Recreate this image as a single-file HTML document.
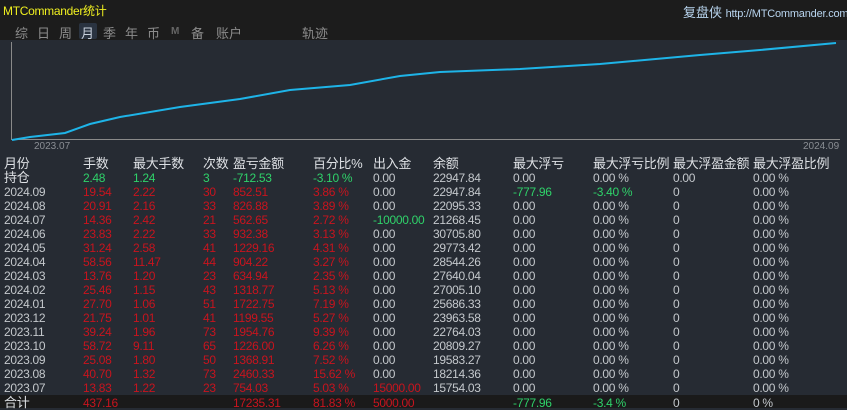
<!DOCTYPE html>
<html><head><meta charset="utf-8"><style>
body{margin:0;width:847px;height:408px;overflow:hidden;background:#262b33;font-family:"Liberation Sans","Noto Sans CJK SC",sans-serif;position:relative}
.top{position:absolute;left:0;top:0;width:847px;height:40px;background:#1c1c1c}
.t{position:absolute;white-space:nowrap}
.tab{position:absolute;top:23px;font-size:13px;color:#8c8c8c;white-space:nowrap}
.r{position:absolute;left:0;width:847px;height:14px;font-size:12px;line-height:14px;color:#c4c8cc;letter-spacing:-0.3px}
.r span{position:absolute;top:0}
.red{color:#c8141e}.grn{color:#2fd26a}
</style></head><body>
<div class="top"></div>
<div class="t" style="left:3px;top:2px;font-size:12px;color:#f0f020;letter-spacing:-0.3px">MTCommander统计</div>
<div class="t" style="left:683px;top:2px;font-size:13px;color:#b8d4ee">复盘侠 <span style="font-size:11px;letter-spacing:-0.2px">http://MTCommander.com</span></div>
<div class="t" style="left:79px;top:23px;width:18px;height:16px;background:#2a3340;border-radius:2px"></div>
<div class="tab" style="left:15px">综</div>
<div class="tab" style="left:37px">日</div>
<div class="tab" style="left:59px">周</div>
<div class="tab" style="left:81px;color:#c8d0dc">月</div>
<div class="tab" style="left:103px">季</div>
<div class="tab" style="left:125px">年</div>
<div class="tab" style="left:147px">币</div>
<div class="tab" style="left:171px;top:26px;font-size:10px;color:#666;font-weight:bold">M</div>
<div class="tab" style="left:191px">备</div>
<div class="tab" style="left:216px">账户</div>
<div class="tab" style="left:302px">轨迹</div>
<svg style="position:absolute;left:0;top:40px" width="847" height="115">
<line x1="11.5" y1="2" x2="11.5" y2="99.5" stroke="#8a8a8a"/>
<line x1="11" y1="99.5" x2="840" y2="99.5" stroke="#8a8a8a"/>
<polyline fill="none" stroke="#1eb4e8" stroke-width="2" points="12,100 30,97 65,93 90,84 120,77 180,67 240,59 290,50 350,45 400,36 440,32 520,29 600,24 700,15 760,10 836,3"/>
<text x="34" y="109" font-size="10" fill="#8a8e94" font-family="Liberation Sans">2023.07</text>
<text x="803" y="109" font-size="10" fill="#8a8e94" font-family="Liberation Sans">2024.09</text>
</svg>
<div class="r" style="top:157px;font-size:13px;color:#dde0e4;height:16px"><span style="left:4px">月份</span><span style="left:83px">手数</span><span style="left:133px">最大手数</span><span style="left:203px">次数</span><span style="left:233px">盈亏金额</span><span style="left:313px">百分比%</span><span style="left:373px">出入金</span><span style="left:433px">余额</span><span style="left:513px">最大浮亏</span><span style="left:593px">最大浮亏比例</span><span style="left:673px">最大浮盈金额</span><span style="left:753px">最大浮盈比例</span></div>
<div class="r" style="top:171px"><span style="left:4px;font-size:13px;color:#dde0e4">持仓</span><span class="grn" style="left:83px">2.48</span><span class="grn" style="left:133px">1.24</span><span class="grn" style="left:203px">3</span><span class="grn" style="left:233px">-712.53</span><span class="grn" style="left:313px">-3.10 %</span><span style="left:373px">0.00</span><span style="left:433px">22947.84</span><span style="left:513px">0.00</span><span style="left:593px">0.00 %</span><span style="left:673px">0.00</span><span style="left:753px">0.00 %</span></div>
<div style="position:absolute;left:0;top:395px;width:847px;height:13px;background:#1a1a1a"></div>
<div class="r" style="top:396px"><span style="left:4px;font-size:13px;color:#dde0e4">合计</span><span class="red" style="left:83px">437.16</span><span class="red" style="left:233px">17235.31</span><span class="red" style="left:313px">81.83 %</span><span class="red" style="left:373px">5000.00</span><span class="grn" style="left:513px">-777.96</span><span class="grn" style="left:593px">-3.4 %</span><span style="left:673px">0</span><span style="left:753px">0 %</span></div>
<div class="r" style="top:185px"><span style="left:4px">2024.09</span><span class="red" style="left:83px">19.54</span><span class="red" style="left:133px">2.22</span><span class="red" style="left:203px">30</span><span class="red" style="left:233px">852.51</span><span class="red" style="left:313px">3.86 %</span><span style="left:373px">0.00</span><span style="left:433px">22947.84</span><span class="grn" style="left:513px">-777.96</span><span class="grn" style="left:593px">-3.40 %</span><span style="left:673px">0</span><span style="left:753px">0.00 %</span></div>
<div class="r" style="top:199px"><span style="left:4px">2024.08</span><span class="red" style="left:83px">20.91</span><span class="red" style="left:133px">2.16</span><span class="red" style="left:203px">33</span><span class="red" style="left:233px">826.88</span><span class="red" style="left:313px">3.89 %</span><span style="left:373px">0.00</span><span style="left:433px">22095.33</span><span style="left:513px">0.00</span><span style="left:593px">0.00 %</span><span style="left:673px">0</span><span style="left:753px">0.00 %</span></div>
<div class="r" style="top:213px"><span style="left:4px">2024.07</span><span class="red" style="left:83px">14.36</span><span class="red" style="left:133px">2.42</span><span class="red" style="left:203px">21</span><span class="red" style="left:233px">562.65</span><span class="red" style="left:313px">2.72 %</span><span class="grn" style="left:373px">-10000.00</span><span style="left:433px">21268.45</span><span style="left:513px">0.00</span><span style="left:593px">0.00 %</span><span style="left:673px">0</span><span style="left:753px">0.00 %</span></div>
<div class="r" style="top:227px"><span style="left:4px">2024.06</span><span class="red" style="left:83px">23.83</span><span class="red" style="left:133px">2.22</span><span class="red" style="left:203px">33</span><span class="red" style="left:233px">932.38</span><span class="red" style="left:313px">3.13 %</span><span style="left:373px">0.00</span><span style="left:433px">30705.80</span><span style="left:513px">0.00</span><span style="left:593px">0.00 %</span><span style="left:673px">0</span><span style="left:753px">0.00 %</span></div>
<div class="r" style="top:241px"><span style="left:4px">2024.05</span><span class="red" style="left:83px">31.24</span><span class="red" style="left:133px">2.58</span><span class="red" style="left:203px">41</span><span class="red" style="left:233px">1229.16</span><span class="red" style="left:313px">4.31 %</span><span style="left:373px">0.00</span><span style="left:433px">29773.42</span><span style="left:513px">0.00</span><span style="left:593px">0.00 %</span><span style="left:673px">0</span><span style="left:753px">0.00 %</span></div>
<div class="r" style="top:255px"><span style="left:4px">2024.04</span><span class="red" style="left:83px">58.56</span><span class="red" style="left:133px">11.47</span><span class="red" style="left:203px">44</span><span class="red" style="left:233px">904.22</span><span class="red" style="left:313px">3.27 %</span><span style="left:373px">0.00</span><span style="left:433px">28544.26</span><span style="left:513px">0.00</span><span style="left:593px">0.00 %</span><span style="left:673px">0</span><span style="left:753px">0.00 %</span></div>
<div class="r" style="top:269px"><span style="left:4px">2024.03</span><span class="red" style="left:83px">13.76</span><span class="red" style="left:133px">1.20</span><span class="red" style="left:203px">23</span><span class="red" style="left:233px">634.94</span><span class="red" style="left:313px">2.35 %</span><span style="left:373px">0.00</span><span style="left:433px">27640.04</span><span style="left:513px">0.00</span><span style="left:593px">0.00 %</span><span style="left:673px">0</span><span style="left:753px">0.00 %</span></div>
<div class="r" style="top:283px"><span style="left:4px">2024.02</span><span class="red" style="left:83px">25.46</span><span class="red" style="left:133px">1.15</span><span class="red" style="left:203px">43</span><span class="red" style="left:233px">1318.77</span><span class="red" style="left:313px">5.13 %</span><span style="left:373px">0.00</span><span style="left:433px">27005.10</span><span style="left:513px">0.00</span><span style="left:593px">0.00 %</span><span style="left:673px">0</span><span style="left:753px">0.00 %</span></div>
<div class="r" style="top:297px"><span style="left:4px">2024.01</span><span class="red" style="left:83px">27.70</span><span class="red" style="left:133px">1.06</span><span class="red" style="left:203px">51</span><span class="red" style="left:233px">1722.75</span><span class="red" style="left:313px">7.19 %</span><span style="left:373px">0.00</span><span style="left:433px">25686.33</span><span style="left:513px">0.00</span><span style="left:593px">0.00 %</span><span style="left:673px">0</span><span style="left:753px">0.00 %</span></div>
<div class="r" style="top:311px"><span style="left:4px">2023.12</span><span class="red" style="left:83px">21.75</span><span class="red" style="left:133px">1.01</span><span class="red" style="left:203px">41</span><span class="red" style="left:233px">1199.55</span><span class="red" style="left:313px">5.27 %</span><span style="left:373px">0.00</span><span style="left:433px">23963.58</span><span style="left:513px">0.00</span><span style="left:593px">0.00 %</span><span style="left:673px">0</span><span style="left:753px">0.00 %</span></div>
<div class="r" style="top:325px"><span style="left:4px">2023.11</span><span class="red" style="left:83px">39.24</span><span class="red" style="left:133px">1.96</span><span class="red" style="left:203px">73</span><span class="red" style="left:233px">1954.76</span><span class="red" style="left:313px">9.39 %</span><span style="left:373px">0.00</span><span style="left:433px">22764.03</span><span style="left:513px">0.00</span><span style="left:593px">0.00 %</span><span style="left:673px">0</span><span style="left:753px">0.00 %</span></div>
<div class="r" style="top:339px"><span style="left:4px">2023.10</span><span class="red" style="left:83px">58.72</span><span class="red" style="left:133px">9.11</span><span class="red" style="left:203px">65</span><span class="red" style="left:233px">1226.00</span><span class="red" style="left:313px">6.26 %</span><span style="left:373px">0.00</span><span style="left:433px">20809.27</span><span style="left:513px">0.00</span><span style="left:593px">0.00 %</span><span style="left:673px">0</span><span style="left:753px">0.00 %</span></div>
<div class="r" style="top:353px"><span style="left:4px">2023.09</span><span class="red" style="left:83px">25.08</span><span class="red" style="left:133px">1.80</span><span class="red" style="left:203px">50</span><span class="red" style="left:233px">1368.91</span><span class="red" style="left:313px">7.52 %</span><span style="left:373px">0.00</span><span style="left:433px">19583.27</span><span style="left:513px">0.00</span><span style="left:593px">0.00 %</span><span style="left:673px">0</span><span style="left:753px">0.00 %</span></div>
<div class="r" style="top:367px"><span style="left:4px">2023.08</span><span class="red" style="left:83px">40.70</span><span class="red" style="left:133px">1.32</span><span class="red" style="left:203px">73</span><span class="red" style="left:233px">2460.33</span><span class="red" style="left:313px">15.62 %</span><span style="left:373px">0.00</span><span style="left:433px">18214.36</span><span style="left:513px">0.00</span><span style="left:593px">0.00 %</span><span style="left:673px">0</span><span style="left:753px">0.00 %</span></div>
<div class="r" style="top:381px"><span style="left:4px">2023.07</span><span class="red" style="left:83px">13.83</span><span class="red" style="left:133px">1.22</span><span class="red" style="left:203px">23</span><span class="red" style="left:233px">754.03</span><span class="red" style="left:313px">5.03 %</span><span class="red" style="left:373px">15000.00</span><span style="left:433px">15754.03</span><span style="left:513px">0.00</span><span style="left:593px">0.00 %</span><span style="left:673px">0</span><span style="left:753px">0.00 %</span></div>
</body></html>
